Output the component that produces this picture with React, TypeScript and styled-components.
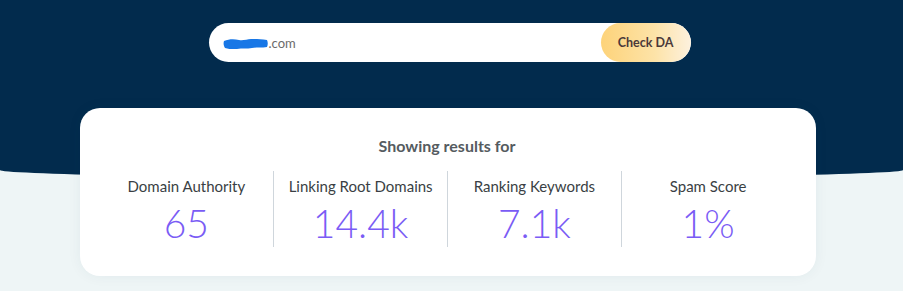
import React from "react";
import styled, { createGlobalStyle } from "styled-components";

interface Stat {
  label: string;
  value: string;
}

const stats: Stat[] = [
  { label: "Domain Authority", value: "65" },
  { label: "Linking Root Domains", value: "14.4k" },
  { label: "Ranking Keywords", value: "7.1k" },
  { label: "Spam Score", value: "1%" },
];

function App() {
  return (
    <Page>
      <GlobalStyle />
      <Hero>
        <Inner>
          <SearchBar>
            <Query>
              <Scribble viewBox="0 0 46 12" aria-hidden="true">
                <path
                  d="M1 4c5-2 10-2 15-1 4 1 8-1 12-1 5 0 10 0 16 1 1 2 1 5 0 7-5 1-10 0-15 1-5 1-10 0-15 1-4 1-8 0-12-1-1-2-2-4-1-7z"
                  fill="#1877e6"
                />
              </Scribble>
              .com
            </Query>
            <CheckButton>Check DA</CheckButton>
          </SearchBar>
        </Inner>
      </Hero>
      <Inner>
        <Card>
          <Heading>Showing results for</Heading>
          <StatRow>
            {stats.map((s, i) => (
              <StatCell key={s.label} $first={i === 0}>
                <Label>{s.label}</Label>
                <Value>{s.value}</Value>
              </StatCell>
            ))}
          </StatRow>
        </Card>
      </Inner>
    </Page>
  );
}

export default App;

const GlobalStyle = createGlobalStyle`
  html, body {
    margin: 0;
    padding: 0;
    background: #eef5f6;
    font-family: Lato, "Open Sans", sans-serif;
  }
`;

const Page = styled.div`
  width: 100%;
  min-height: 291px;
  background: #eef5f6;
  overflow: hidden;
`;

const Hero = styled.section`
  background: #022b4d;
  padding: 23px 0 116px;
  border-bottom-left-radius: 50% 8px;
  border-bottom-right-radius: 50% 8px;
`;

const Inner = styled.div`
  width: 736px;
  margin-left: calc(50% - 372px);
`;

const SearchBar = styled.div`
  display: flex;
  align-items: center;
  width: 482px;
  height: 39px;
  margin-left: 129px;
  background: #fff;
  border-radius: 20px;
  overflow: hidden;
`;

const Query = styled.div`
  flex: 1;
  display: flex;
  align-items: center;
  padding-left: 14px;
  font-size: 13px;
  color: #6b6b6b;
`;

const Scribble = styled.svg`
  width: 46px;
  height: 12px;
`;

const CheckButton = styled.button`
  width: 90px;
  height: 39px;
  border: none;
  border-radius: 20px;
  background: linear-gradient(90deg, #fdd37a 0%, #fde3a8 60%, #fdf1de 100%);
  color: #4b3a3a;
  font-family: Lato, sans-serif;
  font-weight: 700;
  font-size: 12.5px;
  cursor: pointer;
`;

const Card = styled.div`
  margin-top: -70px;
  height: 168px;
  box-sizing: border-box;
  background: #fff;
  border-radius: 20px;
  padding: 28px 21px 0 20px;
  box-shadow: 0 0 14px rgba(20, 60, 90, 0.06);
`;

const Heading = styled.h2`
  margin: 0 0 16px;
  text-align: center;
  font-size: 16px;
  font-weight: 700;
  color: #555b60;
`;

const StatRow = styled.div`
  display: grid;
  grid-template-columns: repeat(4, 1fr);
`;

const StatCell = styled.div<{ $first: boolean }>`
  display: flex;
  flex-direction: column;
  align-items: center;
  height: 76px;
  border-left: ${(p) => (p.$first ? "none" : "1px solid #cfd6dc")};
`;

const Label = styled.div`
  margin-top: 6px;
  font-size: 15px;
  color: #3a3f44;
`;

const Value = styled.div`
  margin-top: 5px;
  font-size: 39px;
  font-weight: 300;
  line-height: 46px;
  color: #7a5cf5;
`;
